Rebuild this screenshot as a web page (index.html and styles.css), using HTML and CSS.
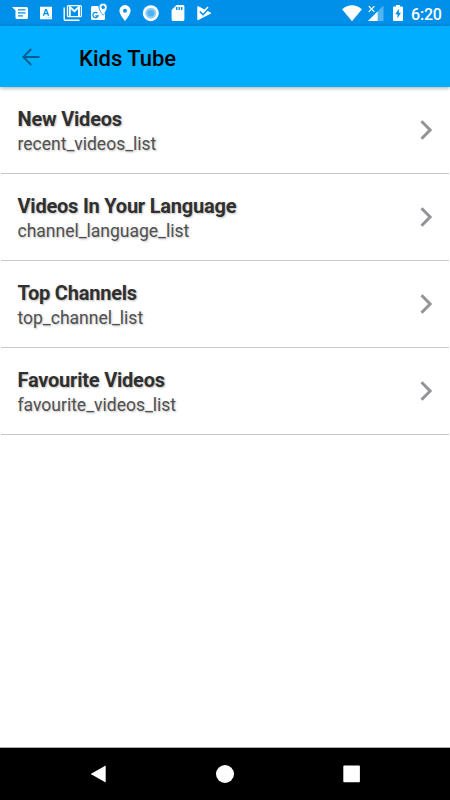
FILE: index.html
```html
<!DOCTYPE html>
<html lang="en">
<head>
    <meta charset="UTF-8">
    <meta name="viewport" content="width=device-width, initial-scale=1.0">
    <title>Kids Tube</title>
    <link rel="stylesheet" href="styles.css">
</head>
<body>

    <div class="status-bar">
        <div class="notifications">
            <!-- Messages -->
            <svg class="icon" viewBox="0 0 20 26">
                <path fill="#fff" fill-rule="evenodd" d="M2 7h14.500q1.500 0 1.500 1.500v9q0 1.500-1.500 1.500h-9.500q-1.500 0-1.500-1.500v-7zM8 9.300v1.200h7.500v-1.200zM8 12.200v1.200h7.500v-1.200zM8 15.200v1.200h5v-1.200z"/>
            </svg>
            <!-- Keyboard -->
            <svg class="icon" viewBox="0 0 20 26">
                <path fill="#fff" fill-rule="evenodd" d="M4 6.800h12v12.400h-12zM9.200 9l-2.500 6.800h1.500l.5-1.500h2.600l.5 1.500h1.500l-2.500-6.800zM10 10.600l.8 2.500h-1.600z"/>
                <path fill="#8ecdf6" d="M10 17h1v1h-1zM12 17h1v1h-1zM14 17h1v1h-1z"/>
            </svg>
            <!-- Mail -->
            <svg class="icon" viewBox="0 0 20 26">
                <path fill="none" stroke="#fff" stroke-width="1.400" d="M1.200 7.500v11.500q0 1.200 1.200 1.200h14.100"/>
                <rect x="4.400" y="5.600" width="14" height="11" rx="1" fill="none" stroke="#fff" stroke-width="1.200"/>
                <path fill="none" stroke="#fff" stroke-width="1.900" d="M6.800 16.500v-9.500l4.600 4.300 4.600-4.300v9.500"/>
            </svg>
            <!-- Maps -->
            <svg class="icon" viewBox="0 0 20 26">
                <path fill="#fff" d="M3.500 6h6q0 4.500 4.300 8.500l2.200-2v6q0 1.500-1.500 1.500h-11q-1.500 0-1.500-1.500v-11q0-1.500 1.500-1.500z"/>
                <path fill="none" stroke="#0090e9" stroke-width="1.300" d="M8.400 13.200a2.600 2.600 0 1 0 .6 2.600h-2.600"/>
                <path fill="#fff" stroke="#0090e9" stroke-width=".6" fill-rule="evenodd" d="M14.100 3.300a4 4 0 0 1 4 4c0 3.200-4 8-4 8s-4-4.800-4-8a4 4 0 0 1 4-4zM14.100 5.700a1.500 1.500 0 1 0 0 3 1.500 1.500 0 0 0 0-3z"/>
            </svg>
            <!-- Location -->
            <svg class="icon" viewBox="0 0 20 26">
                <path fill="#fff" fill-rule="evenodd" d="M10 5a5.600 5.600 0 0 1 5.600 5.600c0 4.200-5.600 10.400-5.600 10.400s-5.600-6.200-5.600-10.400a5.600 5.600 0 0 1 5.600-5.600zM10 8.700a2 2 0 1 0 0 4 2 2 0 0 0 0-4z"/>
            </svg>
            <!-- Recording dot -->
            <svg class="icon" viewBox="0 0 20 26">
                <circle cx="9.800" cy="13.200" r="8" fill="#fff"/>
                <circle cx="9.800" cy="13.200" r="5.500" fill="#8ecdf6"/>
                <circle cx="9.800" cy="13.200" r="3.300" fill="#4eb2f1"/>
            </svg>
            <!-- SD card -->
            <svg class="icon" viewBox="0 0 20 26">
                <path fill="#fff" fill-rule="evenodd" d="M8.500 5h6.500q1.400 0 1.400 1.400v13.200q0 1.400-1.400 1.400h-10q-1.400 0-1.400-1.400v-9.700zM8 7v3h1.400v-3zM10.500 7v3h1.400v-3zM13 7v3h1.400v-3z"/>
            </svg>
            <!-- Play check -->
            <svg class="icon" viewBox="0 0 20 26">
                <path fill="#fff" stroke="#fff" stroke-linejoin="round" d="M3.800 6.500l13 6.600-13 6.700z"/>
                <path fill="none" stroke="#0090e9" stroke-width="1.600" d="M5.800 11.500l3.200 3.200 7-7.200"/>
                <path fill="none" stroke="#fff" stroke-width="1.400" d="M10.500 10.700l3.500-3.700"/>
            </svg>
        </div>
        <div class="system">
            <svg class="wifi" viewBox="0 0 20 26">
                <path fill="#fff" d="M0 9.200q10-7.800 20 0l-10 12z"/>
            </svg>
            <svg class="signal" viewBox="0 0 16 26">
                <path fill="#54b4f0" d="M15.500 5.500v15.500h-15.500z"/>
                <path fill="#fff" d="M9.600 11.400v9.600h-9.600z"/>
                <path fill="none" stroke="#0090e9" stroke-width="3" d="M.8 6.200l5.800 5.800m0-5.800l-5.800 5.800"/>
                <path fill="none" stroke="#fff" stroke-width="1.200" d="M.8 6.200l5.600 5.600m0-5.600l-5.600 5.600"/>
            </svg>
            <svg class="battery" viewBox="0 0 10 26">
                <path fill="#fff" fill-rule="evenodd" d="M3 5h4v1.500h2q1 0 1 1v12.500q0 1-1 1h-8q-1 0-1-1v-12.500q0-1 1-1h2zM5.800 8.700l-3.500 5.600h2.200v4.300l3.400-5.900h-2.100z"/>
            </svg>
            <span class="clock">6:20</span>
        </div>
    </div>

    <header class="toolbar">
        <svg class="back" viewBox="0 0 18 18">
            <path d="M17.500 9h-16M9.300 1l-8 8 8 8"/>
        </svg>
        <h1>Kids Tube</h1>
    </header>

    <main class="list">
        <div class="row">
            <div class="row-text">
                <h2>New Videos</h2>
                <p>recent_videos_list</p>
            </div>
            <svg class="chevron" viewBox="0 0 12 20"><path d="M1.500 1.200l8.600 8.800-8.600 8.800"/></svg>
        </div>
        <div class="row">
            <div class="row-text">
                <h2>Videos In Your Language</h2>
                <p>channel_language_list</p>
            </div>
            <svg class="chevron" viewBox="0 0 12 20"><path d="M1.500 1.200l8.600 8.800-8.600 8.800"/></svg>
        </div>
        <div class="row">
            <div class="row-text">
                <h2>Top Channels</h2>
                <p>top_channel_list</p>
            </div>
            <svg class="chevron" viewBox="0 0 12 20"><path d="M1.500 1.200l8.600 8.800-8.600 8.800"/></svg>
        </div>
        <div class="row">
            <div class="row-text">
                <h2>Favourite Videos</h2>
                <p>favourite_videos_list</p>
            </div>
            <svg class="chevron" viewBox="0 0 12 20"><path d="M1.500 1.200l8.600 8.800-8.600 8.800"/></svg>
        </div>
    </main>

    <nav class="nav-bar">
        <svg class="nav-icon" viewBox="0 0 20 20"><path d="M17.700 1.500v17l-15-8.500z"/></svg>
        <svg class="nav-icon" viewBox="0 0 20 20"><circle cx="10" cy="10" r="9"/></svg>
        <svg class="nav-icon" viewBox="0 0 20 20"><rect x="2.300" y="1.600" width="16.600" height="16.600" rx="0.800"/></svg>
    </nav>

</body>
</html>
```

FILE: styles.css
```css
* {
    box-sizing: border-box;
}

body {
    font-family: Roboto, sans-serif;
    background-color: #fff;
    margin: 0;
    height: 100vh;
    display: flex;
    flex-direction: column;
    overflow: hidden;
}

h1, h2, p {
    margin: 0;
}

svg {
    display: block;
    flex-shrink: 0;
}

.status-bar {
    height: 26px;
    padding: 0 9px 0 10px;
    background-color: #0090e9;
    display: flex;
    justify-content: space-between;
}

.notifications {
    display: flex;
    gap: 6.25px;
}

.icon, .wifi {
    width: 20px;
    height: 26px;
}

.system {
    display: flex;
}

.signal {
    width: 16px;
    height: 26px;
    margin-left: 6px;
}

.battery {
    width: 10px;
    height: 26px;
    margin: 0 8px 0 9px;
}

.clock {
    width: 30px;
    color: #fff;
    font-size: 16px;
    font-weight: 500;
    letter-spacing: -0.2px;
    line-height: 29px;
    white-space: nowrap;
}

.toolbar {
    height: 61px;
    padding: 1px 22px 0;
    background-color: #00aeff;
    box-shadow: 0 1px 4px rgba(0, 0, 0, 0.35);
    display: flex;
    align-items: center;
    z-index: 1;
}

.back {
    width: 18px;
    height: 18px;
    margin-right: 39px;
    fill: none;
    stroke: #005f8c;
    stroke-width: 1.8;
}

h1 {
    padding-top: 3px;
    color: #000;
    font-size: 22px;
    font-weight: 500;
    line-height: 30px;
}

.list {
    flex-grow: 1;
    padding: 0 1px;
}

.row {
    height: 87px;
    padding: 0 17px 1px 16.5px;
    border-bottom: 1px solid #c8c7cc;
    display: flex;
    align-items: center;
    justify-content: space-between;
}

.row-text {
    padding-top: 3px;
    text-shadow: 1px 1px 2px rgba(0, 0, 0, 0.25);
}

h2 {
    color: #303030;
    font-size: 20px;
    font-weight: 700;
    letter-spacing: -0.22px;
    line-height: 26px;
}

p {
    color: #505050;
    font-size: 17.5px;
    line-height: 24px;
}

.chevron {
    width: 12px;
    height: 20px;
    fill: none;
    stroke: #93939a;
    stroke-width: 3;
}

.nav-bar {
    height: 53px;
    padding: 0 89px 0 88px;
    background-color: #000;
    border-top: 1px solid #aaa;
    display: flex;
    align-items: center;
    justify-content: space-between;
}

.nav-icon {
    width: 20px;
    height: 20px;
    fill: #fff;
}
```
